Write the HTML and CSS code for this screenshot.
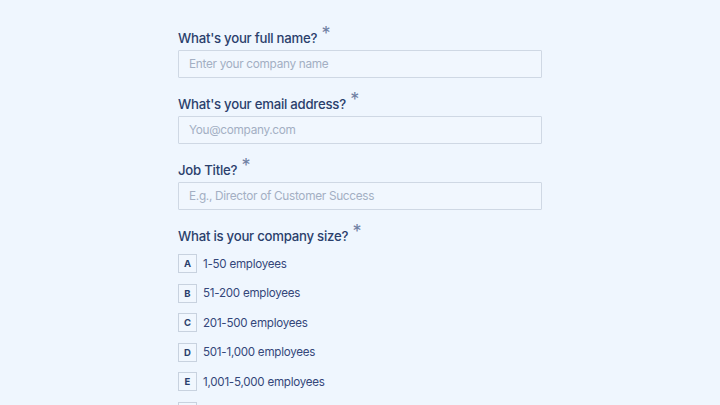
FILE: index.html
```html
<!DOCTYPE html>
<html lang="en">
<head>
  <meta charset="UTF-8">
  <meta name="viewport" content="width=device-width, initial-scale=1.0">
  <title>Company Signup</title>
  <link rel="stylesheet" href="styles.css">
</head>
<body>
  <form class="signup-form">
    <div class="field">
      <label class="field-label">What's your full name? <span class="required">*</span></label>
      <input class="field-input" type="text" placeholder="Enter your company name">
    </div>
    <div class="field">
      <label class="field-label">What's your email address? <span class="required">*</span></label>
      <input class="field-input" type="email" placeholder="You@company.com">
    </div>
    <div class="field">
      <label class="field-label">Job Title? <span class="required">*</span></label>
      <input class="field-input" type="text" placeholder="E.g., Director of Customer Success">
    </div>
    <div class="field">
      <label class="field-label">What is your company size? <span class="required">*</span></label>
      <div class="choices">
        <div class="choice"><span class="choice-key">A</span><span class="choice-text">1-50 employees</span></div>
        <div class="choice"><span class="choice-key">B</span><span class="choice-text">51-200 employees</span></div>
        <div class="choice"><span class="choice-key">C</span><span class="choice-text">201-500 employees</span></div>
        <div class="choice"><span class="choice-key">D</span><span class="choice-text">501-1,000 employees</span></div>
        <div class="choice"><span class="choice-key">E</span><span class="choice-text">1,001-5,000 employees</span></div>
        <div class="choice"><span class="choice-key"></span></div>
      </div>
    </div>
  </form>
</body>
</html>
```

FILE: styles.css
```css
html, body {
  margin: 0;
  height: 100%;
  overflow: hidden;
}

body {
  background-color: #eff6fe;
  font-family: "Inter", "Open Sans", sans-serif;
  color: #2b3f6c;
}

.signup-form {
  width: 364px;
  margin: 0 auto;
  padding-top: 29px;
}

.field {
  display: flex;
  flex-direction: column;
  margin-bottom: 17px;
}

.field-label {
  font-size: 13.2px;
  font-weight: 500;
  line-height: 18px;
  margin-bottom: 3px;
  letter-spacing: -0.25px;
}

.required {
  color: #6f80a3;
  font-size: 18px;
  font-weight: 400;
  position: relative;
  top: -3px;
  line-height: 0;
  margin-left: 1px;
}

.field-input {
  box-sizing: border-box;
  height: 28px;
  width: 100%;
  padding: 0 10px;
  border: 1px solid #cfd8e4;
  border-radius: 1px;
  background-color: #f1f7fe;
  font-family: inherit;
  font-size: 11.8px;
  letter-spacing: -0.3px;
  color: #2b3f6c;
  outline: none;
}

.field-input::placeholder {
  color: #a3afc3;
}

.choices {
  display: flex;
  flex-direction: column;
  gap: 10.6px;
  margin-top: 6px;
}

.choice {
  display: flex;
  align-items: center;
  gap: 6px;
  height: 19px;
}

.choice-key {
  box-sizing: border-box;
  width: 19px;
  height: 19px;
  border: 1px solid #c8d2df;
  display: flex;
  align-items: center;
  justify-content: center;
  font-size: 9.5px;
  font-weight: 700;
  color: #2b3f6c;
  background-color: #f1f7fe;
}

.choice-text {
  font-size: 11.6px;
  letter-spacing: -0.25px;
  color: #34477a;
}
```
